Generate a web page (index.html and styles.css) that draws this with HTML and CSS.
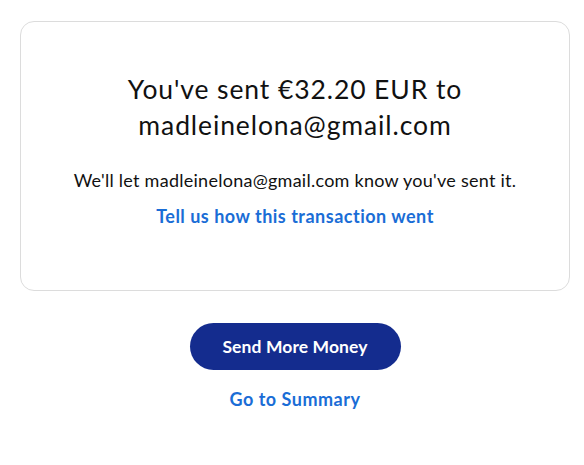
FILE: index.html
```html
<!DOCTYPE html>
<html>
<head>
<meta charset="utf-8">
<link rel="stylesheet" href="styles.css">
</head>
<body>
<main class="page">
  <section class="card">
    <h1 class="title">You've sent €32.20 EUR to<br>madleinelona@gmail.com</h1>
    <p class="note">We'll let madleinelona@gmail.com know you've sent it.</p>
    <a class="link feedback" href="#">Tell us how this transaction went</a>
  </section>
  <div class="actions">
    <button class="primary">Send More Money</button>
    <a class="link summary" href="#">Go to Summary</a>
  </div>
</main>
</body>
</html>
```
FILE: styles.css
```css
* { box-sizing: border-box; }
html, body { margin: 0; background: #fff; }
body {
  font-family: "Lato", "Open Sans", sans-serif;
  color: #111;
}
.page {
  width: 584px;
  padding: 21px 14px 0 20px;
}
.card {
  border: 1px solid #dcdcdc;
  border-radius: 14px;
  height: 270px;
  padding: 49px 10px 0;
  display: flex;
  flex-direction: column;
  align-items: center;
  text-align: center;
}
.title {
  margin: 0;
  font-weight: 400;
  font-size: 26.5px;
  letter-spacing: 0.9px;
  line-height: 36px;
  color: #111;
}
.note {
  margin: 26px 0 0;
  font-size: 18px;
  letter-spacing: 0.26px;
  line-height: 22px;
}
.link {
  color: #1a6dd6;
  font-weight: 700;
  text-decoration: none;
  font-size: 18px;
  letter-spacing: 0.5px;
  line-height: 22px;
}
.feedback { margin-top: 14px; }
.actions {
  display: flex;
  flex-direction: column;
  align-items: center;
  padding-top: 32px;
}
.primary {
  width: 211px;
  height: 47px;
  border: none;
  border-radius: 24px;
  background: #142c8e;
  color: #fff;
  font-family: inherit;
  font-weight: 700;
  font-size: 17.5px;
  letter-spacing: 0.1px;
}
.summary { margin-top: 18px; }
```
